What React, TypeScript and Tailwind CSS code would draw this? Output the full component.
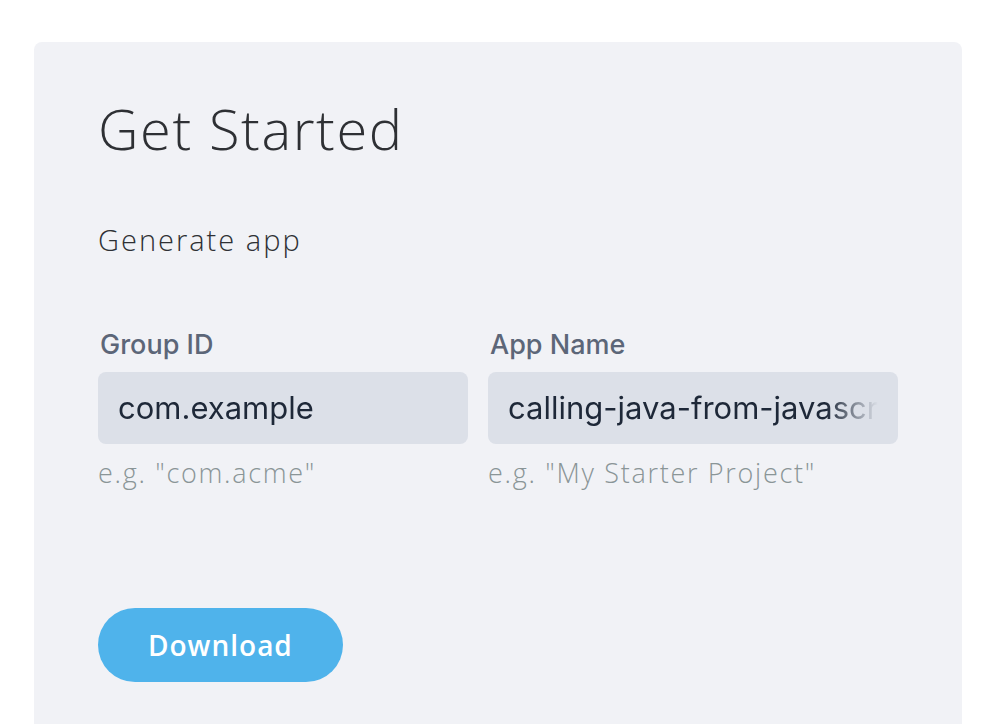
import { type FC } from "react";

const display = { fontFamily: '"Open Sans", "Noto Sans", sans-serif' };

interface FieldProps {
  label: string;
  value: string;
  hint: string;
}

const Field: FC<FieldProps> = ({ label, value, hint }) => (
  <div className="flex flex-col min-w-0">
    <label className="font-['Inter',sans-serif] text-[27px] leading-[30px] font-medium text-[#5c6678] pl-[2px]">
      {label}
    </label>
    <div className="mt-[12px] h-[72px] rounded-lg bg-[#dce0e8] flex items-center px-5 overflow-hidden">
      <input
        readOnly
        value={value}
        className="w-full bg-transparent outline-none font-['Inter',sans-serif] text-[31px] text-[#1e2838]"
        style={{
          maskImage: "linear-gradient(to right, black 86%, transparent 100%)",
        }}
      />
    </div>
    <p
      className="mt-[12px] font-light text-[27px] leading-[34px] tracking-[1.7px] text-[#8a9597]"
      style={display}
    >
      {hint}
    </p>
  </div>
);

export default function App() {
  return (
    <div className="h-[724px] overflow-hidden bg-white pt-[42px] pl-[34px] pr-[32px]">
      <div className="rounded-lg bg-[#f1f2f6] min-h-[760px] px-16 pt-[54px]" style={display}>
        <h1 className="text-[56px] leading-[64px] font-light tracking-[1.6px] text-[#2e3034]">
          Get Started
        </h1>
        <p className="mt-[62px] text-[29px] leading-[36px] font-light tracking-[2px] text-[#2e3034]">
          Generate app
        </p>
        <div className="mt-[72px] grid grid-cols-[370px_410px] gap-5">
          <Field label="Group ID" value="com.example" hint='e.g. "com.acme"' />
          <Field label="App Name" value="calling-java-from-javascript" hint='e.g. "My Starter Project"' />
        </div>
        <button className="mt-[118px] h-[74px] px-[50px] rounded-full bg-[#4fb3eb] text-white text-[28px] font-semibold tracking-[1px]">
          Download
        </button>
      </div>
    </div>
  );
}
